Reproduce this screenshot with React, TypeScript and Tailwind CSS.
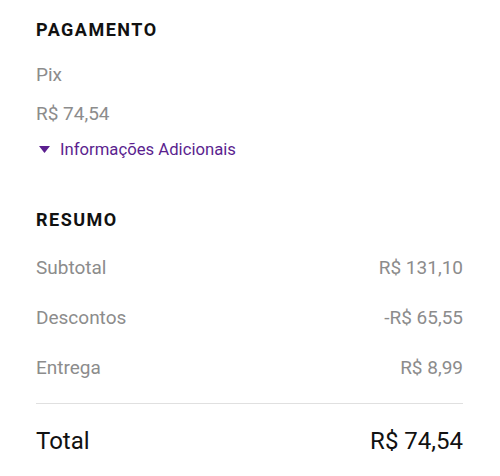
export default function App() {
  const rows = [
    { label: "Subtotal", value: "R$ 131,10" },
    { label: "Descontos", value: "-R$ 65,55" },
    { label: "Entrega", value: "R$ 8,99" },
  ]

  return (
    <div className="w-[500px] h-[476px] bg-white pl-[36px] pr-[37px] pt-[18px] font-['Roboto',sans-serif] overflow-hidden">
      {/* pagamento */}
      <h2 className="text-[18px] leading-[24px] font-bold text-[#111111] tracking-[1.5px]">PAGAMENTO</h2>
      <p className="mt-[21px] text-[19px] leading-[24px] text-[#8c8c8c]">Pix</p>
      <p className="mt-[15px] text-[19px] leading-[24px] text-[#8c8c8c]">R$ 74,54</p>
      <button className="mt-[12px] flex items-center gap-[10px] text-[16.7px] leading-[24px] text-[#5b1f8f]">
        <svg width="11" height="8" viewBox="0 0 11 8" className="ml-[3px]">
          <path d="M0 0 L11 0 L5.5 7 Z" fill="#5b1f8f" />
        </svg>
        Informações Adicionais
      </button>

      {/* resumo */}
      <h2 className="mt-[46px] text-[18px] leading-[24px] font-bold text-[#111111] tracking-[1.5px]">RESUMO</h2>
      <div className="mt-[24px] flex flex-col gap-[26px]">
        {rows.map((r) => (
          <div key={r.label} className="flex justify-between text-[19px] leading-[24px] text-[#8c8c8c]">
            <span>{r.label}</span>
            <span>{r.value}</span>
          </div>
        ))}
      </div>
      <div className="mt-[23px] h-px bg-[#e0e0e0]" />
      <div className="mt-[21px] flex justify-between text-[24px] leading-[32px] text-[#111111]">
        <span>Total</span>
        <span>R$ 74,54</span>
      </div>
    </div>
  )
}
